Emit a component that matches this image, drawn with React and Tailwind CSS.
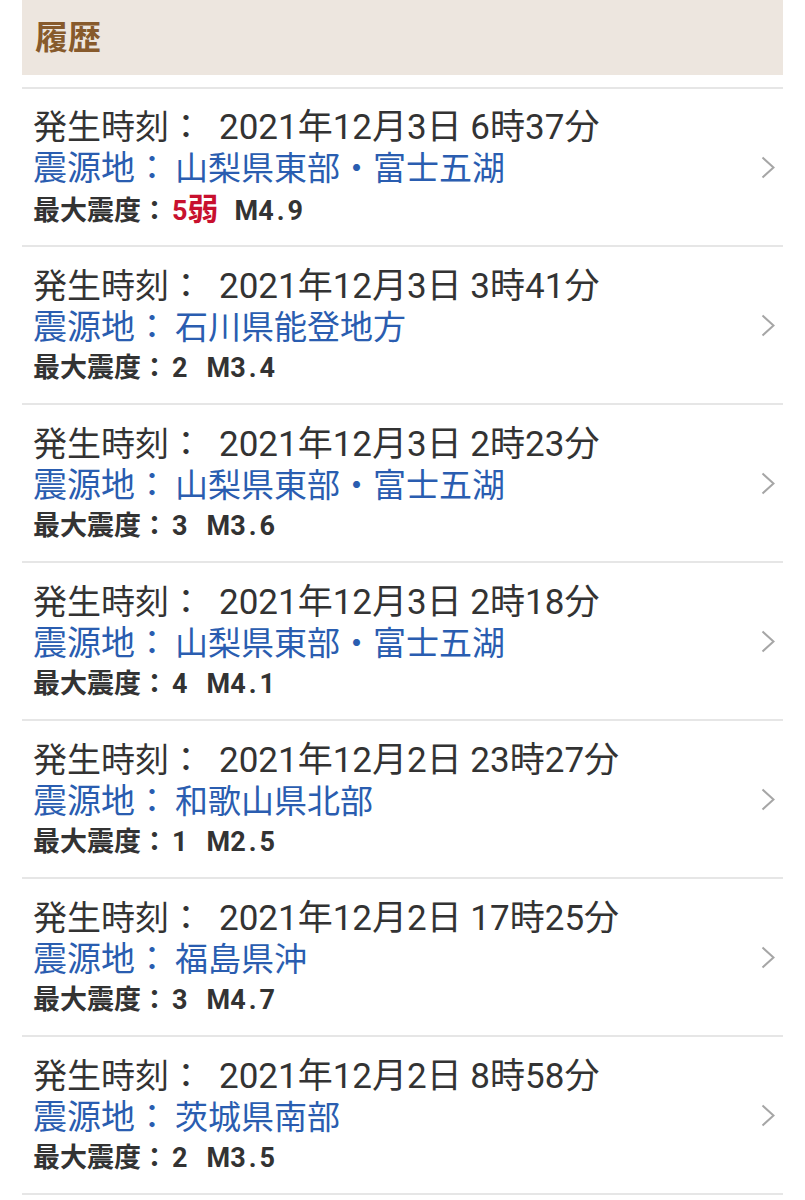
const quakes = [
  { time: "2021年12月3日 6時37分", place: "山梨県東部・富士五湖", shindo: "5", sub: "弱", mag: ["4", "9"] },
  { time: "2021年12月3日 3時41分", place: "石川県能登地方", shindo: "2", mag: ["3", "4"] },
  { time: "2021年12月3日 2時23分", place: "山梨県東部・富士五湖", shindo: "3", mag: ["3", "6"] },
  { time: "2021年12月3日 2時18分", place: "山梨県東部・富士五湖", shindo: "4", mag: ["4", "1"] },
  { time: "2021年12月2日 23時27分", place: "和歌山県北部", shindo: "1", mag: ["2", "5"] },
  { time: "2021年12月2日 17時25分", place: "福島県沖", shindo: "3", mag: ["4", "7"] },
  { time: "2021年12月2日 8時58分", place: "茨城県南部", shindo: "2", mag: ["3", "5"] },
];

function Chevron() {
  return (
    <svg width="14" height="23" viewBox="0 0 14 23" fill="none" className="shrink-0">
      <polyline points="1.5,1.5 12.5,11.5 1.5,21.5" stroke="#a6a6a6" strokeWidth="2" />
    </svg>
  );
}

function QuakeRow({ q }) {
  return (
    <div className="flex items-center h-[158px] border-b-2 border-[#e6e6e6] pl-[11px] pr-[8px]">
      <div className="flex-1 pt-[4px]">
        <div className="text-[34px] leading-[40px] text-[#333333] whitespace-nowrap">
          発生時刻：<span className="ml-[16px] text-[35px]">{q.time}</span>
        </div>
        <div className="text-[34px] leading-[41px] text-[#2a5db0] whitespace-nowrap">
          震源地：<span className="ml-[6px] text-[33px]">{q.place}</span>
        </div>
        <div className="text-[27px] leading-[41px] font-bold text-[#333333] whitespace-nowrap">
          最大震度：
          {q.sub ? (
            <span className="ml-[4px] text-[#c8102e]">
              <span className="text-[27px]">{q.shindo}</span>
              <span className="text-[31px]">{q.sub}</span>
            </span>
          ) : (
            <span className="ml-[4px] text-[27px]">{q.shindo}</span>
          )}
          <span className={q.sub ? "ml-[16px] text-[27px]" : "ml-[19px] text-[27px]"}>
            M{q.mag[0]}
            <span className="mx-[3px]">.</span>
            {q.mag[1]}
          </span>
        </div>
      </div>
      <Chevron />
    </div>
  );
}

export default function App() {
  return (
    <div
      className="bg-white min-h-[1200px]"
      style={{ fontFamily: 'Roboto, "Noto Sans CJK JP", sans-serif' }}
    >
      <div className="mx-[22px] w-[761px]">
        <div className="h-[75px] bg-[#ede6df] flex items-center px-[13px]">
          <h2 className="text-[33px] font-bold text-[#875a2c] leading-none">履歴</h2>
        </div>
        <div className="mt-[12px] border-t-2 border-[#e6e6e6]">
          {quakes.map((q, i) => (
            <QuakeRow key={i} q={q} />
          ))}
        </div>
      </div>
    </div>
  );
}
